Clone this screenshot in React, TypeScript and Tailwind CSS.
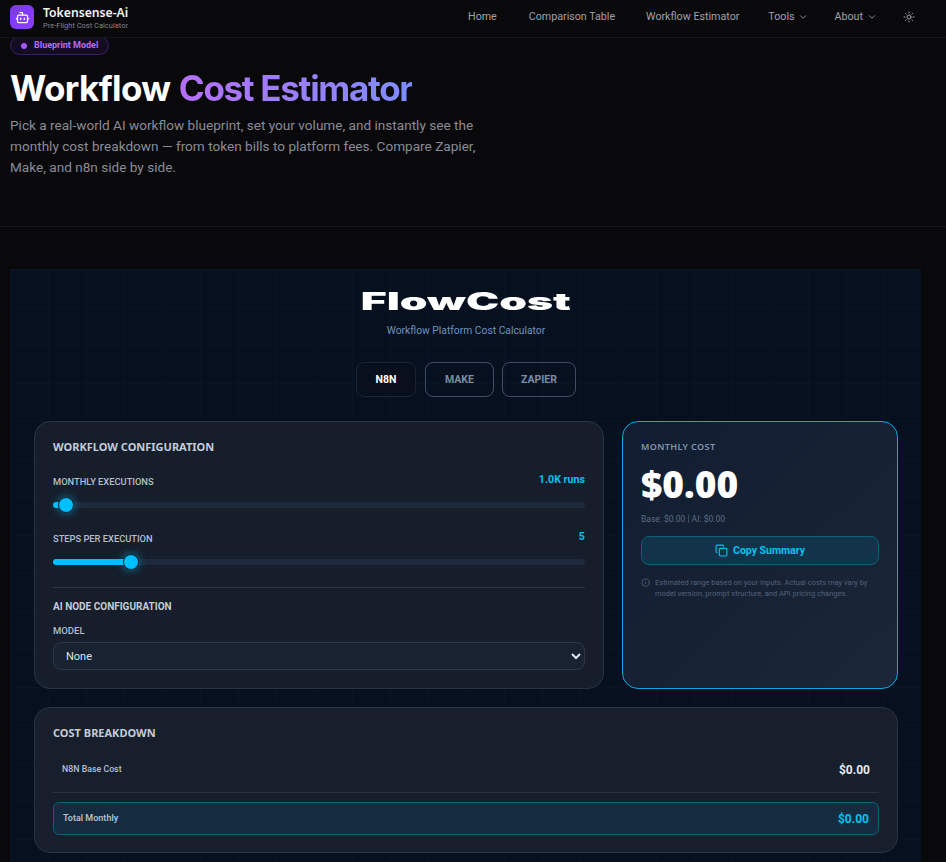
import { Bot, ChevronDown, Copy, Info, Sun } from 'lucide-react'

const sans = "font-['Roboto','Noto_Sans',sans-serif]"
const noto = "font-['Noto_Sans',sans-serif]"

function Slider({ label, value, fill }: { label: string; value: string; fill: number }) {
  return (
    <div>
      <div className="flex items-start justify-between h-[20px]">
        <span className="text-[9.3px] leading-[15px] font-medium text-[#b4bfce] mt-[2px]">{label}</span>
        <span className="text-[10.7px] font-bold text-[#00c2f0]">{value}</span>
      </div>
      <div className="relative mt-[10px] h-[6px] rounded-full bg-[#1e2a3b]">
        <div className="h-full rounded-full bg-[#00bfff]" style={{ width: fill }} />
        <div
          className="absolute top-[-5px] size-[16px] -ml-[8px] rounded-full bg-[#00bfff] border border-[#06202f] shadow-[0_0_8px_rgba(0,191,255,0.55)]"
          style={{ left: fill }}
        />
      </div>
    </div>
  )
}

export default function App() {
  return (
    <div className={`h-[862px] overflow-hidden bg-[#09090b] ${sans}`}>
      {/* Header */}
      <header className="relative z-10 h-[38px] bg-[#09090b] border-b border-[#17171b] flex items-center justify-between pl-[10px] pr-[31px] pb-[3px]">
        <div className="flex items-center gap-[9px]">
          <div className="size-6 rounded-[6px] bg-gradient-to-br from-[#7c3aed] to-[#8b3dff] flex items-center justify-center">
            <Bot size={15} className="text-white" strokeWidth={2} />
          </div>
          <div className="flex flex-col">
            <span className={`text-[12.2px] leading-[16px] font-semibold text-[#f4f4f5] ${noto}`}>Tokensense-Ai</span>
            <span className="text-[7.5px] leading-[9px] text-[#83838c]">Pre-Flight Cost Calculator</span>
          </div>
        </div>
        <nav className="flex items-center text-[10.7px] text-[#a1a1aa]">
          <span>Home</span>
          <span className="ml-[32px]">Comparison Table</span>
          <span className="ml-[31px]">Workflow Estimator</span>
          <span className="ml-[29px] flex items-center gap-[3px]">Tools <ChevronDown size={10} /></span>
          <span className="ml-[27px] flex items-center gap-[4px]">About <ChevronDown size={10} /></span>
          <Sun size={12} className="ml-[26px]" />
        </nav>
      </header>

      {/* Hero */}
      <section className="h-[191px] border-b border-[#17171b] px-[10px]">
        <div className="-mt-[2px] flex w-fit items-center gap-[7px] h-[19px] px-[10px] rounded-full border border-[#3a1d66] bg-[#1c0f33]/60">
          <span className="size-[6px] rounded-full bg-[#a855f7]" />
          <span className="text-[9px] font-bold text-[#b66bff]">Blueprint Model</span>
        </div>
        <h1 className="mt-[11px] text-[35px] leading-[44px] font-bold font-['Inter',sans-serif] text-white">
          <span className="tracking-[-0.6px]">Workflow</span>{' '}
          <span className="tracking-[-1.3px] bg-gradient-to-r from-[#b46ff7] to-[#7c8cff] bg-clip-text text-transparent">Cost Estimator</span>
        </h1>
        <p className="mt-[5px] w-[475px] text-[13.6px] leading-[21px] text-[#8b8b96]">
          Pick a real-world AI workflow blueprint, set your volume, and instantly see the monthly cost breakdown — from
          token bills to platform fees. Compare Zapier, Make, and n8n side by side.
        </p>
      </section>

      {/* Calculator */}
      <main className="mt-[42px] ml-[10px] w-[911px] h-[640px] pl-[24px] bg-[#07101f] bg-[linear-gradient(rgba(0,191,255,0.03)_1px,transparent_1px),linear-gradient(90deg,rgba(0,191,255,0.03)_1px,transparent_1px)] bg-[size:38px_38px]">
        <div className="w-[864px] pt-[19px] flex flex-col items-center">
          <h2 className="text-[24px] leading-[28px] font-black font-['Inter',sans-serif] text-white scale-x-[1.85]">FlowCost</h2>
          <p className="mt-[8px] text-[10.3px] leading-[14px] text-[#6f93bb]">Workflow Platform Cost Calculator</p>
          <div className="mt-[24px] flex text-[10.5px] font-bold">
            <button className="w-[60px] h-[35px] rounded-[8px] border border-[#1a2433] bg-[#08101e] text-white">N8N</button>
            <button className="ml-[9px] w-[69px] h-[35px] rounded-[8px] border border-[#3e4e66] text-[#7d8ca3]">MAKE</button>
            <button className="ml-[8px] w-[74px] h-[35px] rounded-[8px] border border-[#3e4e66] text-[#7d8ca3]">ZAPIER</button>
          </div>
        </div>

        <div className="mt-[24px] w-[864px] flex gap-[18px]">
          {/* Configuration */}
          <section className="w-[570px] h-[268px] rounded-[16px] border border-[#2a3341] bg-[#161e2b] px-[18px] pt-[17px]">
            <h3 className={`text-[11px] leading-[16px] font-bold text-[#c4ccd8] ${noto}`}>WORKFLOW CONFIGURATION</h3>
            <div className="mt-[17px]">
              <Slider label="MONTHLY EXECUTIONS" value="1.0K runs" fill={13} />
            </div>
            <div className="mt-[21px]">
              <Slider label="STEPS PER EXECUTION" value="5" fill={78} />
            </div>
            <div className="mt-[22px] border-t border-[#2a3341] pt-[13px]">
              <h4 className="text-[10px] leading-[12px] font-bold text-[#c4ccd8]">AI NODE CONFIGURATION</h4>
              <label className="block mt-[12px] text-[9.5px] leading-[12px] font-medium text-[#b4bfce]">MODEL</label>
              <select className="mt-[5px] w-full h-[28px] rounded-[8px] border border-[#2d3746] bg-[#182231] pl-[8px] pr-[4px] text-[11px] text-[#dfe4ea]">
                <option>None</option>
              </select>
            </div>
          </section>

          {/* Monthly cost */}
          <aside className="w-[276px] h-[268px] rounded-[16px] border border-[#12a5e0] bg-gradient-to-br from-[#111d30] to-[#1b2638] px-[18px] pt-[18px]">
            <div className={`text-[9px] leading-[14px] font-semibold tracking-[0.4px] text-[#8496b0] ${noto}`}>MONTHLY COST</div>
            <div className={`mt-[8px] text-[37px] leading-[44px] font-black text-white ${noto}`}>$0.00</div>
            <div className="mt-[7px] text-[8.5px] leading-[12px] text-[#5d6d85]">Base: $0.00 | AI: $0.00</div>
            <button className="mt-[11px] w-full h-[29px] rounded-[8px] border border-[#0d5f7a] bg-[#13334a] flex items-center justify-center gap-[5px] text-[10.5px] font-bold text-[#00c2f0]">
              <Copy size={13} /> Copy Summary
            </button>
            <div className="mt-[12px] flex gap-[5px] text-[7.5px] leading-[11px] text-[#53617a]">
              <Info size={9} className="mt-[1px] shrink-0" />
              <p>Estimated range based on your inputs. Actual costs may vary by model version, prompt structure, and API pricing changes.</p>
            </div>
          </aside>
        </div>

        {/* Breakdown */}
        <section className="mt-[18px] w-[864px] h-[146px] rounded-[16px] border border-[#2a3341] bg-[#171f2c] px-[18px] pt-[17px]">
          <h3 className={`text-[11px] leading-[16px] font-bold text-[#c4ccd8] ${noto}`}>COST BREAKDOWN</h3>
          <div className="mt-[11px] h-[36px] px-[9px] flex items-center justify-between">
            <span className="text-[8.8px] font-medium text-[#b4bfce]">N8N Base Cost</span>
            <span className="text-[12px] font-bold text-[#e5e9ef]">$0.00</span>
          </div>
          <div className="mt-[4px] border-t border-[#2a3341]" />
          <div className="mt-[9px] h-[33px] px-[9px] rounded-[6px] border border-[#0d5f7a] bg-[#152c40] flex items-center justify-between">
            <span className="text-[9px] font-semibold text-[#b4bfce]">Total Monthly</span>
            <span className="text-[12px] font-bold text-[#00c2f0]">$0.00</span>
          </div>
        </section>
      </main>
    </div>
  )
}
